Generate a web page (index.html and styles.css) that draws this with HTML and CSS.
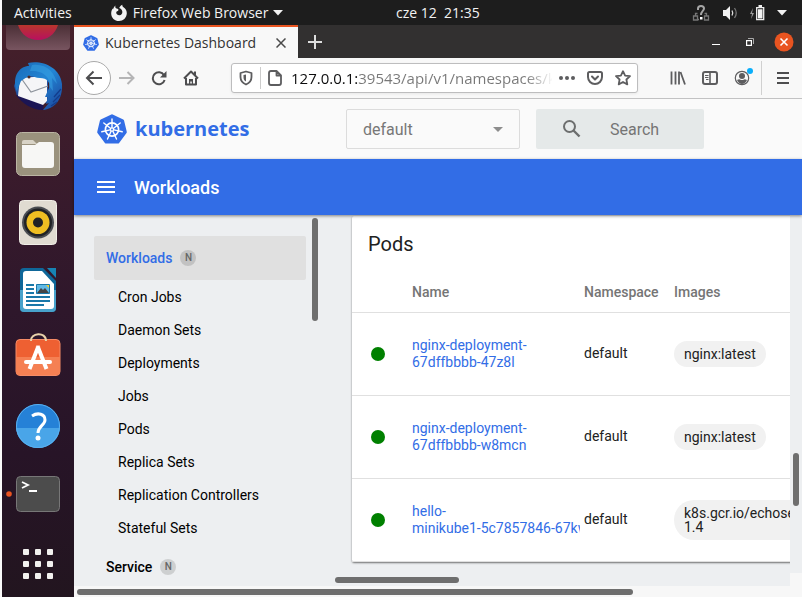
FILE: index.html
```html
<!DOCTYPE html>
<html lang="en">
<head>
<meta charset="utf-8">
<title>Kubernetes Dashboard</title>
<link rel="stylesheet" href="styles.css">
</head>
<body>
<svg class="sprite" aria-hidden="true">
  <symbol id="helm" viewBox="0 0 30 30">
    <path fill="#326de6" stroke="#326de6" stroke-width="3" stroke-linejoin="round" d="M15 1.8 25.6 6.8 28.3 18 20.9 28H9.1L1.7 18 4.4 6.8Z"/>
    <g fill="none" stroke="#fff" stroke-linecap="round">
      <circle cx="15" cy="15.500" r="6.600" stroke-width="1.700"/>
      <path stroke-width="1.400" d="M15 13.500V5M16.600 14.200 23.200 9M17 15.900 25.200 17.800M15.900 17.300 19.500 25M14.100 17.300 10.500 25M13 15.900 4.800 17.800M13.400 14.200 6.800 9"/>
    </g>
    <circle cx="15" cy="15.500" r="2.200" fill="#fff"/>
    <circle cx="15" cy="15.500" r=".9" fill="#326de6"/>
  </symbol>
</svg>
<div class="desktop">
  <header class="topbar">
    <div class="topbar-left">
      <button class="plain" type="button">Activities</button>
      <button class="plain app-menu" type="button">
        <svg width="18" height="18" viewBox="0 0 18 18"><path fill="#f2f2f2" d="M5.500 1.500C5 3 5.400 4 6.500 4.600 8 5 8.600 5.300 8.400 6.200 7.800 7.300 6.300 7.200 6.200 8.500 6.300 10.500 8 11.400 9.500 11.200 11.400 11 12.600 9.400 12.300 7.400 12 5.600 10.800 4.500 9.200 4 9.800 2.500 11 1.200 12.300.8 12.200 2 12.700 2.500 13.500 3.200 15.800 4.700 17 6.800 16.800 9.500 16.500 14 13.200 17 9 17 4.600 17 1.200 13.700 1.200 9.400 1.200 7.500 1.700 5.700 2.800 4.400L3 5.500C3.500 3.800 4.300 2.500 5.500 1.500Z"/></svg>
        <span>Firefox Web Browser</span>
        <svg width="10" height="6" viewBox="0 0 10 6"><path fill="#f2f2f2" d="M0 0H10L5 5.500Z"/></svg>
      </button>
    </div>
    <time class="clock">cze 12&nbsp; 21:35</time>
    <div class="tray">
      <svg width="18" height="18" viewBox="0 0 18 18" fill="none"><path stroke="#777" stroke-width="1.300" d="M1.500 12h4v4h-4zM12.500 12h4v4h-4zM3.500 12V9.500h2M14.500 12V9.500h-2M6 15.500h1"/><path stroke="#a5a5a5" stroke-width="2" d="M6 6V4.500C6 1 12 1 12 4.500 12 7 9 7 9 11"/><path fill="#fff" d="M8 13h2.500v2.500H8z"/></svg>
      <svg width="16" height="16" viewBox="0 0 16 16" fill="none"><path fill="#f2f2f2" d="M1 5h3l4-4v14l-4-4H1z"/><path stroke="#e0e0e0" stroke-width="1.300" d="M10 5.500q1.500 2.500 0 5"/><path stroke="#777" stroke-width="1.300" d="M12.500 3q3.500 5 0 10"/></svg>
      <svg width="15" height="16" viewBox="0 0 15 16"><path fill="#999" d="M3 3 0 9h2l-1 5 3-6H2z"/><path fill="none" stroke="#eee" stroke-width="1.300" d="M6.700 2.700h7v12h-7z"/><path fill="#f2f2f2" d="M8 4.200h4.500v9.200H8zM8.500 0h3.500v2H8.500z"/></svg>
      <svg width="10" height="6" viewBox="0 0 10 6"><path fill="#f2f2f2" d="M0 0H10L5 5.500Z"/></svg>
    </div>
  </header>

  <div class="workspace">
    <nav class="dock" aria-label="Dock">
      <button class="dock-item dock-first" type="button" aria-label="Firefox">
        <svg width="64" height="25" viewBox="0 0 64 25"><defs><linearGradient id="tile" x2="0" y2="1"><stop stop-color="#4b2f36"/><stop offset="1" stop-color="#785560"/></linearGradient><linearGradient id="ff" x2="0" y2="1"><stop stop-color="#b8362c"/><stop offset="1" stop-color="#b8105f"/></linearGradient></defs><path fill="url(#tile)" d="M0 0h64v21q0 4-4 4H4q-4 0-4-4z"/><path fill="url(#ff)" d="M12 0h40C46 20 18 20 12 0z"/></svg>
      </button>
      <button class="dock-item" type="button" aria-label="Thunderbird">
        <svg width="68" height="68" viewBox="0 0 68 68"><defs><linearGradient id="tb" x1="0" y1="0" x2="1" y2="1"><stop stop-color="#1a6bb8"/><stop offset=".5" stop-color="#2385d4"/><stop offset="1" stop-color="#1a3f96"/></linearGradient></defs><path fill="#22509f" d="M14 22 10 34 13 44 30 54 44 50V20L25 14z"/><path fill="#1b1554" d="M12 43c6 8 15 15 27 15l1-12z"/><path fill="#f5f5f7" d="M16 26 43 24V49L39 53 14 44z"/><path fill="none" stroke="#8e949c" stroke-width="1.200" d="M17 26 27 40 44 34"/><path fill="url(#tb)" d="M13 40C7 24 16 14 25 14L24 11C38 8 56 15 58 32 59 48 50 57 39 58L45 51 42 52 44 45 41 45 45 36C47 31 43 26 36 26 30 26 28 22 23 25L17 29C15 34 14 36 13 40z"/><path fill="#39a6e6" d="M28 13C42 11 51 20 53 32L48 26 49 39 45 34C47 25 38 18 26 19z" opacity=".5"/><circle cx="25" cy="25" r="1.500" fill="#512d25"/><path fill="none" stroke="#133c8c" stroke-width="1.200" d="M57 37l-7 8M56 43l-7 7M53 50l-6 4"/></svg>
      </button>
      <button class="dock-item" type="button" aria-label="Files">
        <svg width="68" height="68" viewBox="0 0 68 68"><rect x="12.500" y="12.500" width="43" height="43" rx="5" fill="#9a927d" stroke="#bbb5a4"/><path fill="#d8d3c6" d="M18 22q0-2 2-2h9l4 4h-15z"/><path fill="#f7f7f5" d="M18 25h13l4-3h12q3 0 3 3v20q0 3-3 3H21q-3 0-3-3z"/></svg>
      </button>
      <button class="dock-item" type="button" aria-label="Rhythmbox">
        <svg width="68" height="68" viewBox="0 0 68 68"><rect x="15.500" y="12.500" width="37" height="44" rx="4" fill="#e0dbd1" stroke="#f1eee7"/><circle cx="34" cy="34.500" r="16" fill="#4a4d52"/><circle cx="34" cy="34.500" r="14" fill="#202225"/><circle cx="34" cy="34.500" r="11.500" fill="#eebe22"/><circle cx="34" cy="34.500" r="5" fill="#202225"/></svg>
      </button>
      <button class="dock-item" type="button" aria-label="LibreOffice Writer">
        <svg width="68" height="68" viewBox="0 0 68 68"><path fill="#0f6799" d="M20 12h19l13 13v27q0 4-4 4H20q-4 0-4-4V16q0-4 4-4z"/><path fill="#48a2cb" d="M16 34h36v18q0 4-4 4H20q-4 0-4-4z"/><path fill="#1784b4" d="M43 12h9v10z"/><path fill="#fff" d="M22 15h16l12 13v22q0 3-3 3H22q-3 0-3-3V18q0-3 3-3z"/><path stroke="#1a78a9" stroke-width="2" d="M22 29h8M22 33h8M22 37h8M22 41h24M22 45h24M22 49h18"/><path fill="#60b9e6" stroke="#1a78a9" d="M32.500 28.500h13v9h-13z"/><path fill="#444" d="m33 37 4-5 2 2 2-2 4 5z"/><path fill="#efcf30" d="M42 29h3v3z"/></svg>
      </button>
      <button class="dock-item" type="button" aria-label="Ubuntu Software">
        <svg width="68" height="68" viewBox="0 0 68 68"><path fill="#ee6032" stroke="#f58b66" d="M16 15.500h36q4 0 4 4v28q0 4-4 4H16q-4 0-4-4v-28q0-4 4-4z"/><path fill="#f58053" d="M12 33h44v14q0 4-4 4H16q-4 0-4-4z"/><path fill="none" stroke="#e9d2aa" stroke-width="2" d="M27 17c-1-8 15-10 15 0"/><path stroke="#fff" stroke-width="4" d="m34.500 22-9 23M33.500 22l9 23" fill="none"/><path stroke="#fff" stroke-width="4" stroke-linecap="round" d="M22 38h24"/></svg>
      </button>
      <button class="dock-item" type="button" aria-label="Help">
        <svg width="68" height="68" viewBox="0 0 68 68"><circle cx="34" cy="34" r="22" fill="#2581d7"/><path fill="#49a5e8" d="M12 36h44c-1 12-11 20-22 20s-21-8-22-20z"/><circle cx="34" cy="34" r="21.500" fill="none" stroke="#5ab0ee"/><path fill="none" stroke="#fff" stroke-width="3" d="M28 24c6-4 13-2 13 4 0 5-7 6-7 13"/><circle cx="34" cy="46" r="2.500" fill="#fff"/></svg>
      </button>
      <button class="dock-item" type="button" aria-label="Terminal">
        <svg width="68" height="68" viewBox="0 0 68 68"><circle cx="5" cy="34" r="2.800" fill="#e95420"/><rect x="12.500" y="16.500" width="43" height="35" rx="4" fill="#4c4c4c" stroke="#777"/><path fill="none" stroke="#fff" stroke-width="1.800" d="m18 22 6 3-6 3M25 31h8"/></svg>
      </button>
      <button class="dock-item" type="button" aria-label="Show Applications">
        <svg width="68" height="68" viewBox="0 0 68 68"><g fill="#f2f1ef"><rect x="19" y="21" width="6" height="6" rx="1"/><rect x="31" y="21" width="6" height="6" rx="1"/><rect x="43" y="21" width="6" height="6" rx="1"/><rect x="19" y="33" width="6" height="6" rx="1"/><rect x="31" y="33" width="6" height="6" rx="1"/><rect x="43" y="33" width="6" height="6" rx="1"/><rect x="19" y="45" width="6" height="6" rx="1"/><rect x="31" y="45" width="6" height="6" rx="1"/><rect x="43" y="45" width="6" height="6" rx="1"/></g></svg>
      </button>
    </nav>

    <div class="browser">
      <div class="tabstrip">
        <div class="tab">
          <svg width="16" height="16"><use href="#helm"/></svg>
          <span class="tab-title">Kubernetes Dashboard</span>
          <button class="plain" type="button" aria-label="Close tab"><svg width="10" height="10" viewBox="0 0 10 10"><path stroke="#4a4a4a" stroke-width="1.500" d="m.5.5 9 9M9.500.5l-9 9"/></svg></button>
        </div>
        <button class="plain new-tab" type="button" aria-label="New tab"><svg width="14" height="14" viewBox="0 0 14 14"><path stroke="#ddd" stroke-width="2" d="M7 0v14M0 7h14"/></svg></button>
        <div class="window-controls">
          <button class="plain" type="button" aria-label="Minimize"><svg width="8" height="8" viewBox="0 0 8 8"><path fill="#fff" d="M0 6h8v1H0z"/></svg></button>
          <button class="plain" type="button" aria-label="Restore"><svg width="8" height="8" viewBox="0 0 8 8" fill="none"><path stroke="#aaa" d="M2 .5h5.500V6"/><path stroke="#fff" stroke-width="1.200" d="M.6 2.600h4.800v4.800H.6z"/></svg></button>
          <button class="plain" type="button" aria-label="Close"><svg width="20" height="20" viewBox="0 0 20 20"><circle cx="10" cy="10" r="9.500" fill="#e95420"/><path stroke="#fff" stroke-width="1.600" d="m6.500 6.500 7 7M13.500 6.500l-7 7"/></svg></button>
        </div>
      </div>

      <div class="toolbar">
        <button class="plain back" type="button" aria-label="Back"><svg width="18" height="16" viewBox="0 0 18 16" fill="none" stroke="#4d4d4f" stroke-width="2"><path d="M17 8H2M8.500 1.500 2 8l6.500 6.500"/></svg></button>
        <div class="nav-buttons">
          <button class="plain" type="button" aria-label="Forward" disabled><svg width="16" height="16" viewBox="0 0 16 16" fill="none" stroke="#b5b5b6" stroke-width="2"><path d="M0 8h14M8.500 2l6 6-6 6"/></svg></button>
          <button class="plain" type="button" aria-label="Reload"><svg width="16" height="16" viewBox="0 0 16 16"><path fill="none" stroke="#4d4d4f" stroke-width="2" d="M13 5.200A6 6 0 1 0 13.600 10"/><path fill="#4d4d4f" d="M15.500 1v6.500H9z"/></svg></button>
          <button class="plain" type="button" aria-label="Home"><svg width="16" height="16" viewBox="0 0 16 16"><path fill="none" stroke="#4d4d4f" stroke-width="2" stroke-linejoin="round" d="M1 8.500 8 1.500l7 7M3 8v6.500h10V8"/><path fill="#4d4d4f" d="M11 1.500h2V6l-2-2zM6 9h4v5H8.800v-2.500H7.300V14H6z"/></svg></button>
        </div>
        <div class="urlbar">
          <svg width="14" height="16" viewBox="0 0 14 16"><path fill="none" stroke="#5d5d5f" stroke-width="1.800" stroke-linejoin="round" d="M7 1.500 12.500 3v4c0 4-2 6-5.500 7.500C3.500 13 1.500 11 1.500 7V3z"/><path fill="#5d5d5f" d="M7 4.500v7C5 10.500 4.500 9 4.500 7V5z"/></svg>
          <span class="url-divider"></span>
          <svg width="14" height="16" viewBox="0 0 14 16"><path fill="none" stroke="#5d5d5f" stroke-width="1.800" stroke-linejoin="round" d="M3 1h5.500L13 5.500V13q0 2-2 2H3q-2 0-2-2V3q0-2 2-2zM8.500 1v4.500H13"/></svg>
          <input class="url-input" type="text" aria-label="Address" value="127.0.0.1:39543/api/v1/namespaces/kubernetes-dashboard">
          <div class="url-actions">
            <button class="plain" type="button" aria-label="Page actions"><svg width="16" height="16" viewBox="0 0 16 16" fill="#5d5d5f"><circle cx="2" cy="8" r="2"/><circle cx="8" cy="8" r="2"/><circle cx="14" cy="8" r="2"/></svg></button>
            <button class="plain" type="button" aria-label="Save to Pocket"><svg width="16" height="16" viewBox="0 0 16 16" fill="none" stroke="#5d5d5f" stroke-width="2" stroke-linecap="round" stroke-linejoin="round"><path d="M2.500 2h11q1.500 0 1.500 1.500V7a7 7 0 0 1-14 0V3.500Q1 2 2.500 2zM5 6.500l3 3 3-3"/></svg></button>
            <button class="plain" type="button" aria-label="Bookmark"><svg width="16" height="16" viewBox="0 0 16 16" fill="none" stroke="#5d5d5f" stroke-width="1.800" stroke-linejoin="round"><path d="m8 1.200 2.100 4.400 4.900.6-3.600 3.300.9 4.900L8 12l-4.300 2.400.9-4.900L1 6.200l4.900-.6z"/></svg></button>
          </div>
        </div>
        <div class="toolbar-right">
          <button class="plain" type="button" aria-label="Library"><svg width="16" height="16" viewBox="0 0 16 16" stroke="#5d5d5f" stroke-width="1.800"><path d="M1.500 1.500v13M5.500 1.500v13M9 1.500v13M10.500 2l4.500 12.500"/></svg></button>
          <button class="plain" type="button" aria-label="Sidebar"><svg width="16" height="16" viewBox="0 0 16 16" fill="none" stroke="#5d5d5f"><rect x="1" y="2" width="14" height="12" rx="2" stroke-width="2"/><path stroke-width="1.600" d="M8 2v12"/><path d="M3 5.500h3.500M3 7.500h3.500M4 9.500h2.500"/></svg></button>
          <button class="plain account" type="button" aria-label="Account"><svg width="16" height="16" viewBox="0 0 16 16"><circle cx="8" cy="8" r="6.700" fill="none" stroke="#5d5d5f" stroke-width="1.200"/><circle cx="8" cy="6" r="3" fill="#5d5d5f"/><path fill="#5d5d5f" d="M3 10q2-1 3-.5 2 1 4 0 1-.5 3 .5-2 4-5 4t-5-4z"/></svg></button>
        </div>
        <button class="plain menu" type="button" aria-label="Menu"><svg width="12" height="14" viewBox="0 0 12 14" stroke="#4d4d4f" stroke-width="2"><path d="M0 2h12M0 7h12M0 12h12"/></svg></button>
      </div>

      <div class="page">
        <header class="k8s-header">
          <a class="brand" href="#"><svg width="30" height="30"><use href="#helm"/></svg><span>kubernetes</span></a>
          <div class="namespace">
            <select aria-label="Namespace"><option>default</option></select>
            <svg class="namespace-caret" width="10" height="5" viewBox="0 0 10 5"><path fill="#8d8d8d" d="M0 0h10L5 5z"/></svg>
          </div>
          <label class="search">
            <svg width="20" height="20" viewBox="0 0 20 20" fill="none" stroke="#6c6e6e" stroke-width="2"><circle cx="7.500" cy="7.500" r="5.500"/><path stroke-width="2.400" d="m11.500 11.500 6 6"/></svg>
            <input type="search" placeholder="Search" aria-label="Search">
          </label>
        </header>
        <div class="titlebar">
          <button class="plain" type="button" aria-label="Toggle navigation"><svg width="18" height="12" viewBox="0 0 18 12"><path fill="#fff" d="M0 0h18v2H0zM0 5h18v2H0zM0 10h18v2H0z"/></svg></button>
          <h1>Workloads</h1>
        </div>
        <div class="content">
          <nav class="sidebar" aria-label="Resources">
            <a class="group active" href="#">Workloads <span class="badge">N</span></a>
            <a class="entry" href="#">Cron Jobs</a>
            <a class="entry" href="#">Daemon Sets</a>
            <a class="entry" href="#">Deployments</a>
            <a class="entry" href="#">Jobs</a>
            <a class="entry" href="#">Pods</a>
            <a class="entry" href="#">Replica Sets</a>
            <a class="entry" href="#">Replication Controllers</a>
            <a class="entry" href="#">Stateful Sets</a>
            <a class="group" href="#">Service <span class="badge">N</span></a>
          </nav>
          <div class="rail"><span class="thumb rail-thumb"></span></div>
          <main class="main">
            <section class="card">
              <h2>Pods</h2>
              <table>
                <colgroup><col class="col-status"><col class="col-name"><col class="col-ns"><col></colgroup>
                <thead><tr><th></th><th>Name</th><th>Namespace</th><th>Images</th></tr></thead>
                <tbody>
                  <tr><td><span class="status"></span></td><td><a href="#">nginx-deployment-<br>67dffbbbb-47z8l</a></td><td>default</td><td><span class="chip">nginx:latest</span></td></tr>
                  <tr><td><span class="status"></span></td><td><a href="#">nginx-deployment-<br>67dffbbbb-w8mcn</a></td><td>default</td><td><span class="chip">nginx:latest</span></td></tr>
                  <tr><td><span class="status"></span></td><td><a href="#">hello-<br>minikube1-5c7857846-67kw</a></td><td>default</td><td><span class="chip">k8s.gcr.io/echoserver:<br>1.4</span></td></tr>
                </tbody>
              </table>
            </section>
            <span class="thumb main-thumb"></span>
          </main>
          <div class="main-rail"><span class="thumb main-rail-thumb"></span></div>
        </div>
        <div class="page-scroll"><span class="thumb page-thumb"></span></div>
      </div>
    </div>
  </div>
</div>
</body>
</html>
```
FILE: styles.css
```css
* { box-sizing: border-box; }

body {
  margin: 0;
  background: #fafafa;
  font-family: "Open Sans", "Noto Sans", sans-serif;
}

svg { display: block; flex: none; }
.sprite { position: absolute; width: 0; height: 0; }
a { color: inherit; text-decoration: none; }

.plain {
  display: flex;
  align-items: center;
  padding: 0;
  border: 0;
  background: none;
  color: inherit;
  font: inherit;
}

.desktop {
  display: flex;
  flex-direction: column;
  height: 100vh;
  padding-left: 2px;
  overflow: hidden;
}

/* System bar */
.topbar {
  display: grid;
  grid-template-columns: 394px 1fr auto;
  align-items: center;
  flex: none;
  height: 25px;
  padding-right: 15px;
  background: #1d1d1d;
  color: #f2f2f2;
  font-size: 14px;
  line-height: 20px;
}
.topbar-left { display: flex; gap: 38px; padding-left: 12px; }
.app-menu { gap: 5px; }
.tray { display: flex; align-items: center; gap: 12px; }

.workspace { display: flex; flex: 1; min-height: 0; }

/* Dock */
.dock {
  display: flex;
  flex-direction: column;
  flex: none;
  align-items: center;
  width: 72px;
  background: linear-gradient(#45202a, #3a1b2c 25%, #2e172b 50%, #271427 75%, #22151f);
}
.dock-item { flex: none; padding: 0; border: 0; background: none; }
.dock-first { margin-bottom: 2px; }

/* Browser chrome */
.browser { display: flex; flex: 1; flex-direction: column; min-width: 0; }
.tabstrip { display: flex; flex: none; height: 33px; background: #323030; }
.tab {
  display: flex;
  align-items: center;
  gap: 6px;
  width: 224px;
  padding: 0 12px 0 9px;
  border-top: 2px solid #e95420;
  background: #f8f8f8;
  color: #333;
  font-size: 14px;
}
.tab-title { flex: 1; white-space: nowrap; }
.new-tab { padding: 0 10px; }
.window-controls { display: flex; gap: 26px; margin-left: auto; padding-right: 8px; }
.window-controls > :last-child { margin-left: -6px; }

.toolbar {
  display: flex;
  align-items: center;
  flex: none;
  height: 41px;
  padding-left: 3px;
  border-bottom: 1px solid #c2c2c3;
  background: #f8f8f8;
}
.back {
  justify-content: center;
  width: 34px;
  height: 34px;
  border: 1px solid #aaa;
  border-radius: 50%;
  background: #fff;
}
.nav-buttons { display: flex; gap: 16px; margin: 0 32px 0 8px; }
.urlbar {
  display: flex;
  align-items: center;
  flex: 1;
  gap: 7px;
  min-width: 0;
  height: 30px;
  padding: 0 6px 0 7px;
  border: 1px solid #bdbdbe;
  border-radius: 3px;
  background: #fff;
  box-shadow: 0 1px 3px #0001;
}
.url-divider { width: 1px; height: 22px; background: #ccc; }
.url-input {
  flex: 1;
  min-width: 0;
  margin-left: 2px;
  padding: 0;
  border: 0;
  outline: 0;
  background: linear-gradient(to right, #0c0c0d 68px, #777 68px, #777 235px, transparent 262px);
  background-clip: text;
  color: transparent;
  font: 15px/24px "Open Sans", "Noto Sans", sans-serif;
}
.url-actions { display: flex; gap: 12px; }
.toolbar-right { display: flex; gap: 16px; margin-left: 32px; }
.account { position: relative; }
.account::after {
  position: absolute;
  top: -2px;
  right: -3px;
  width: 6px;
  height: 6px;
  border-radius: 50%;
  background: #0aaefa;
  content: "";
}
.menu {
  height: 34px;
  margin-left: 11px;
  padding: 0 13px 0 15px;
  border-left: 1px solid #d0d0d0;
}

/* Dashboard */
.page {
  display: flex;
  flex: 1;
  flex-direction: column;
  min-height: 0;
  background: #f7f7f7;
  font-family: Roboto, sans-serif;
}
.k8s-header {
  display: flex;
  align-items: center;
  flex: none;
  height: 60px;
  padding-left: 23px;
  background: #fafafa;
}
.brand {
  display: flex;
  align-items: center;
  gap: 8px;
  width: 249px;
  color: #326de6;
  font: 700 20px/28px "Open Sans", "Noto Sans", sans-serif;
}
.namespace { position: relative; width: 174px; }
.namespace select {
  width: 100%;
  height: 40px;
  padding: 0 16px;
  border: 1px solid #dcdcdc;
  border-radius: 2px;
  appearance: none;
  background: #fafafa;
  color: #777;
  font: 16px Roboto, sans-serif;
}
.namespace-caret { position: absolute; top: 18px; right: 17px; pointer-events: none; }
.search {
  display: flex;
  align-items: center;
  gap: 28px;
  width: 168px;
  height: 40px;
  margin-left: 16px;
  padding-left: 26px;
  border-radius: 2px;
  background: #e5e9e9;
}
.search input {
  flex: 1;
  min-width: 0;
  padding: 0;
  border: 0;
  background: none;
  font: 16px Roboto, sans-serif;
}
.search input::placeholder { color: #757575; }

.titlebar {
  position: relative;
  z-index: 1;
  display: flex;
  align-items: center;
  flex: none;
  gap: 19px;
  height: 56px;
  padding-left: 23px;
  background: #326de6;
  box-shadow: 0 1px 3px #0007;
  color: #fff;
}
.titlebar h1 { margin: 0; font-size: 18px; font-weight: 500; }

.content { display: flex; flex: 1; min-height: 0; overflow: hidden; background: #edeff1; }
.sidebar {
  flex: none;
  width: 232px;
  padding: 21px 0 0 20px;
  overflow: hidden;
  font-size: 14px;
  color: #000;
}
.group {
  display: flex;
  align-items: center;
  gap: 8px;
  height: 44px;
  padding-left: 12px;
  border-radius: 2px;
  font-weight: 500;
}
.active { margin-bottom: 1px; background: #e0e0e0; color: #326de6; }
.badge {
  width: 16px;
  height: 16px;
  border-radius: 50%;
  background: #0002;
  color: #666;
  font-size: 10px;
  line-height: 16px;
  text-align: center;
}
.entry { display: block; padding-left: 24px; line-height: 33px; }

.thumb { display: block; border-radius: 3px; background: #6e6e6e; }
.rail { flex: none; width: 23px; padding: 3px 6px; }
.rail-thumb { width: 6px; height: 103px; }

.main {
  display: flex;
  flex: 1;
  flex-direction: column;
  justify-content: space-between;
  min-width: 0;
  padding: 1px 0 3px 6px;
  overflow: hidden;
}
.main-thumb { width: 124px; height: 6px; }
.main-rail {
  flex: none;
  width: 12px;
  padding: 238px 3px 0;
  border-bottom: 13px solid #f7f7f7;
}
.main-rail-thumb { width: 6px; height: 53px; }
.page-scroll { flex: none; padding: 3px; height: 11px; }
.page-thumb { width: 77%; height: 6px; }

.card {
  width: 560px;
  margin-left: 17px;
  border-radius: 2px;
  background: #fff;
  box-shadow: 0 1px 2px #0008;
}
.card h2 {
  margin: 0;
  padding: 0 16px;
  color: #212121;
  font-size: 20px;
  font-weight: 400;
  line-height: 56px;
}
table { width: 100%; border-collapse: collapse; table-layout: fixed; color: #212121; font-size: 14px; }
.col-status { width: 60px; }
.col-name { width: 172px; }
.col-ns { width: 90px; }
th, td { padding: 0; text-align: left; }
th { height: 40px; border-bottom: 1px solid #e0e0e0; color: #757575; font-weight: 500; }
td { height: 83px; border-bottom: 1px solid #e0e0e0; line-height: 17px; }
td a { display: block; width: 168px; overflow: hidden; color: #326de6; white-space: nowrap; }
.status { display: block; width: 14px; height: 14px; margin-left: 19px; border-radius: 50%; background: #008000; }
.chip {
  display: inline-block;
  padding: 6px 10px;
  border-radius: 20px;
  background: #f1f1f1;
  line-height: 14px;
}
```
